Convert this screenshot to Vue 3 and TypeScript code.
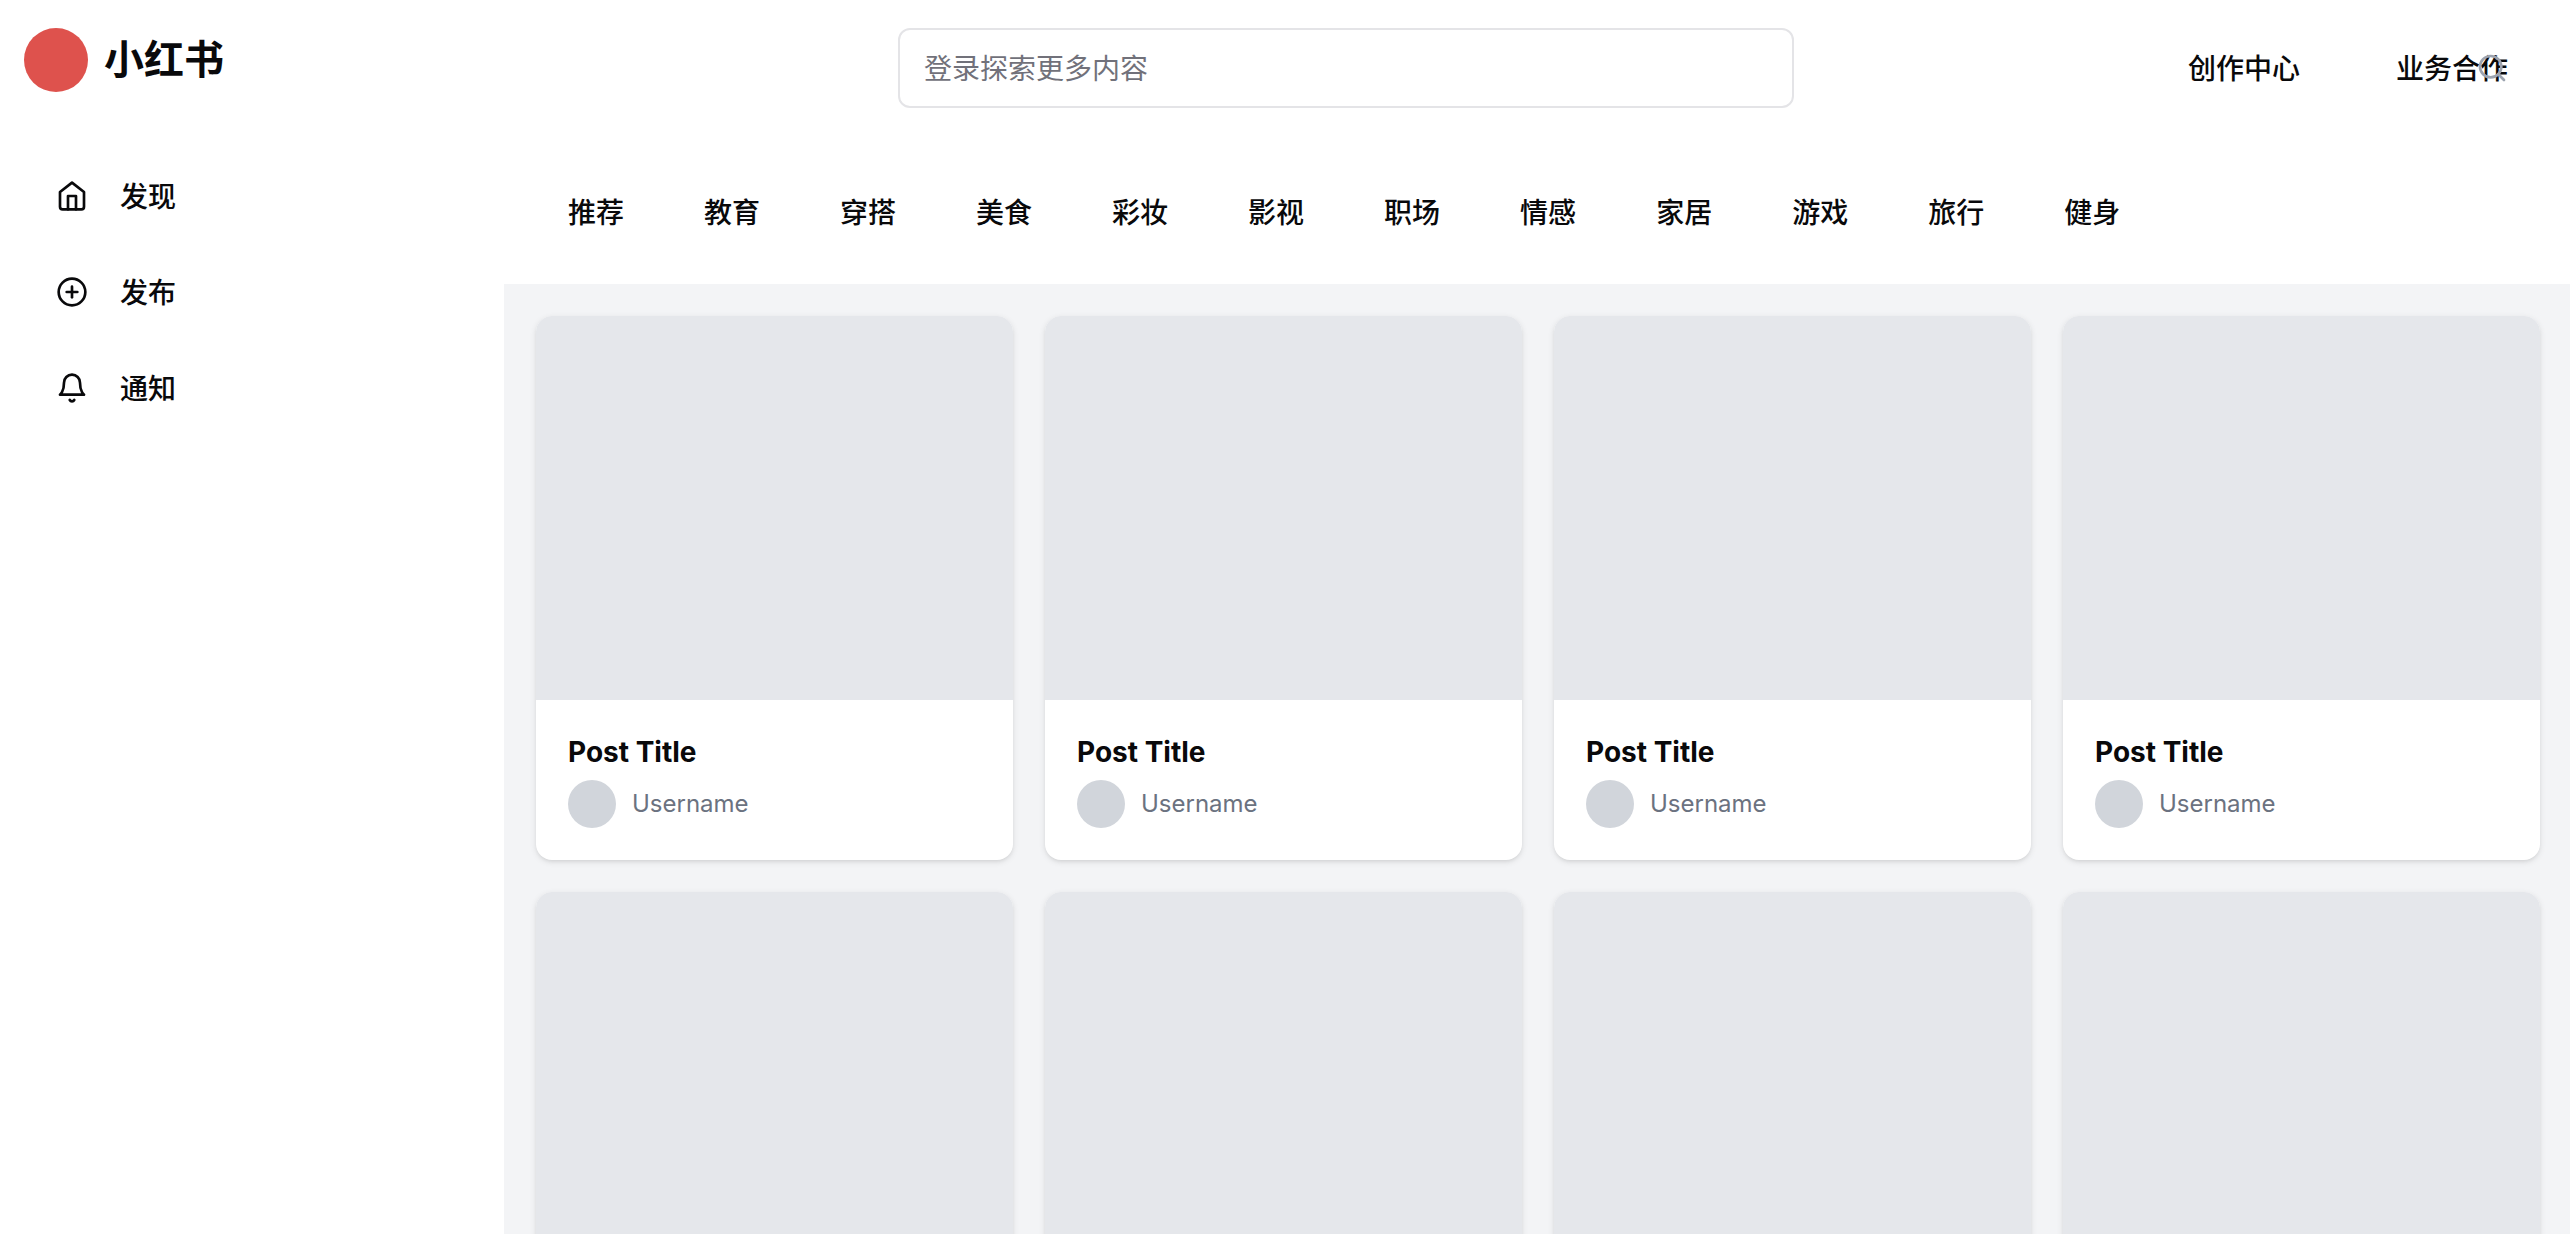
<script setup lang="ts">
interface Post {
  id: number
  title: string
  username: string
}

type IconName = 'home' | 'plus' | 'bell'

const menu: { icon: IconName; label: string }[] = [
  { icon: 'home', label: '发现' },
  { icon: 'plus', label: '发布' },
  { icon: 'bell', label: '通知' },
]

const links: string[] = ['创作中心', '业务合作']

const categories: string[] = [
  '推荐', '教育', '穿搭', '美食', '彩妆', '影视',
  '职场', '情感', '家居', '游戏', '旅行', '健身',
]

const posts: Post[] = Array.from({ length: 8 }, (_, i) => ({
  id: i + 1,
  title: 'Post Title',
  username: 'Username',
}))
</script>

<template>
  <div class="page">
    <aside class="sidebar">
      <div class="brand">
        <span class="brand-mark"></span>
        <span class="brand-name">小红书</span>
      </div>
      <nav class="menu">
        <button v-for="item in menu" :key="item.label" type="button" class="btn menu-item">
          <svg class="icon" viewBox="0 0 24 24" aria-hidden="true">
            <template v-if="item.icon === 'home'">
              <path d="m3 9 9-7 9 7v11a2 2 0 0 1-2 2H5a2 2 0 0 1-2-2z" />
              <polyline points="9 22 9 12 15 12 15 22" />
            </template>
            <template v-else-if="item.icon === 'plus'">
              <circle cx="12" cy="12" r="10" />
              <path d="M8 12h8" />
              <path d="M12 8v8" />
            </template>
            <template v-else>
              <path d="M6 8a6 6 0 0 1 12 0c0 7 3 9 3 9H3s3-2 3-9" />
              <path d="M10.3 21a1.94 1.94 0 0 0 3.4 0" />
            </template>
          </svg>
          <span class="btn-label">{{ item.label }}</span>
        </button>
      </nav>
    </aside>

    <main class="main">
      <header class="header">
        <div class="search">
          <input class="search-input" type="search" placeholder="登录探索更多内容" aria-label="搜索" />
        </div>
        <nav class="links">
          <button v-for="link in links" :key="link" type="button" class="btn">
            <span class="btn-label">{{ link }}</span>
          </button>
        </nav>
        <svg class="icon search-icon" viewBox="0 0 24 24" aria-hidden="true">
          <circle cx="11" cy="11" r="8" />
          <path d="m21 21-4.3-4.3" />
        </svg>
      </header>

      <nav class="categories">
        <button v-for="category in categories" :key="category" type="button" class="btn">
          <span class="btn-label">{{ category }}</span>
        </button>
      </nav>

      <section class="feed">
        <article v-for="post in posts" :key="post.id" class="card">
          <div class="cover"></div>
          <div class="card-body">
            <h3 class="card-title">{{ post.title }}</h3>
            <div class="author">
              <span class="avatar"></span>
              <span>{{ post.username }}</span>
            </div>
          </div>
        </article>
      </section>
    </main>
  </div>
</template>

<style>
body {
  margin: 0;
  background: #ffffff;
}
</style>

<style scoped>
.page {
  display: flex;
  height: 100vh;
  background: #ffffff;
  color: #09090b;
  font-family: Inter, "Noto Sans CJK SC", sans-serif;
  font-size: 28px;
  line-height: 40px;
}

.page *,
.page {
  box-sizing: border-box;
}

.sidebar {
  flex: 0 0 504px;
  padding: 28px 24px;
}

.brand {
  display: flex;
  align-items: center;
  gap: 16px;
  height: 64px;
  margin-bottom: 64px;
}

.brand-mark {
  width: 64px;
  height: 64px;
  border-radius: 50%;
  background: #de524d;
}

.brand-name {
  font-size: 40px;
  line-height: 56px;
  font-weight: 700;
}

.menu {
  display: flex;
  flex-direction: column;
  gap: 16px;
}

.btn {
  display: inline-flex;
  align-items: center;
  justify-content: center;
  height: 80px;
  padding: 0 32px;
  border: 0;
  background: transparent;
  color: inherit;
  font: inherit;
  font-weight: 500;
  white-space: nowrap;
  cursor: pointer;
}

.btn-label {
  padding-top: 2px;
}

.menu-item {
  justify-content: flex-start;
  gap: 32px;
}

.icon {
  width: 32px;
  height: 32px;
  fill: none;
  stroke: currentColor;
  stroke-width: 2;
  stroke-linecap: round;
  stroke-linejoin: round;
}

.main {
  flex: 1;
  min-width: 0;
  display: flex;
  flex-direction: column;
  overflow-y: auto;
  scrollbar-width: none;
}

.header {
  position: relative;
  display: flex;
  align-items: center;
  padding: 28px 30px 0 32px;
}

.search {
  flex: 1;
  max-width: 896px;
  margin: 0 auto;
}

.search-input {
  display: block;
  width: 100%;
  height: 80px;
  padding: 2px 24px 0;
  border: 2px solid #e4e4e7;
  border-radius: 12px;
  background: #ffffff;
  color: inherit;
  font: inherit;
  appearance: none;
  outline: none;
}

.search-input::placeholder {
  color: #71717a;
  opacity: 1;
}

.links {
  display: flex;
  gap: 32px;
}

.search-icon {
  position: absolute;
  top: 52px;
  right: 62px;
  color: #9ca3af;
}

.categories {
  display: flex;
  gap: 16px;
  padding: 64px 32px 32px;
}

.feed {
  flex: 1 0 auto;
  display: grid;
  grid-template-columns: repeat(4, minmax(0, 1fr));
  align-content: start;
  gap: 32px;
  padding: 32px 30px 32px 32px;
  background: #f3f4f6;
}

.card {
  overflow: hidden;
  border-radius: 16px;
  background: #ffffff;
  box-shadow: 0 2px 6px rgba(0, 0, 0, 0.1), 0 2px 4px -2px rgba(0, 0, 0, 0.1);
}

.cover {
  height: 384px;
  background: #e5e7eb;
}

.card-body {
  padding: 32px;
}

.card-title {
  margin: 0 0 8px;
  font-size: 28px;
  line-height: 40px;
  font-weight: 700;
}

.author {
  display: flex;
  align-items: center;
  gap: 16px;
  color: #6b7280;
  font-size: 24px;
  line-height: 32px;
}

.avatar {
  width: 48px;
  height: 48px;
  border-radius: 50%;
  background: #d1d5db;
}
</style>
